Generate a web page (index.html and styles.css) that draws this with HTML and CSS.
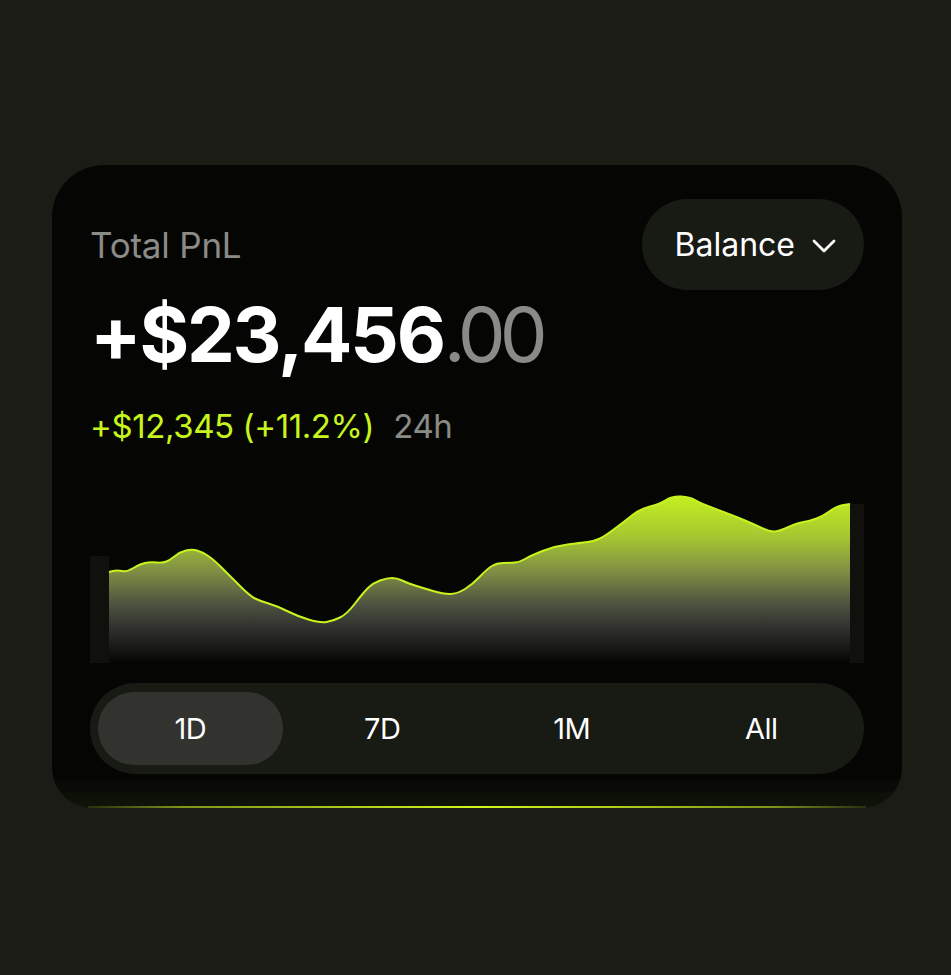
FILE: index.html
```html
<!DOCTYPE html>
<html>
<head>
    <link rel="stylesheet" href="styles.css">
</head>
<body>
    <div class="card">
        <div class="header">
            <span class="label">Total PnL</span>
            <button class="select-button">
                <span>Balance</span>
                <svg width="24" height="14" viewBox="0 0 24 14" fill="none" stroke="currentColor" stroke-width="2.8" stroke-linecap="round" stroke-linejoin="round">
                    <path d="M2 2l10 10 10-10"></path>
                </svg>
            </button>
        </div>

        <div class="total">+$23,456<span class="cents">.00</span></div>

        <div class="change">
            <span class="change-value">+$12,345 (+11.2%)</span>
            <span class="change-period">24h</span>
        </div>

        <div class="chart">
            <svg width="774" height="172" viewBox="0 0 774 172">
                <defs>
                    <linearGradient id="areaFill" gradientUnits="userSpaceOnUse" x1="0" y1="0" x2="0" y2="172">
                        <stop offset="0" stop-color="#c8f41e"></stop>
                        <stop offset="0.26" stop-color="#a6c830"></stop>
                        <stop offset="0.47" stop-color="#7f8e44"></stop>
                        <stop offset="0.66" stop-color="#4c5240"></stop>
                        <stop offset="0.8" stop-color="#30302d"></stop>
                        <stop offset="0.93" stop-color="#141510"></stop>
                        <stop offset="1" stop-color="#050603"></stop>
                    </linearGradient>
                </defs>
                <rect x="0" y="65" width="19" height="107" fill="#10110c"></rect>
                <rect x="760" y="13" width="14" height="159" fill="#10110c"></rect>
                <path fill="url(#areaFill)" d="M19 81 L23 80 Q27 79 32 80 Q37 81 43.5 77 Q50 73 55 72 Q60 71 66.5 71.5 Q73 72 76.5 70.5 Q80 69 85 65 Q90 61 96 59.5 Q102 58 107 59.5 Q112 61 117.5 64.5 Q123 68 131.5 76.5 Q140 85 150 95 Q160 105 165 107.5 Q170 110 178.5 112.5 Q187 115 197 120 Q207 125 218.5 128.5 Q230 132 236.5 131 Q243 130 250 126.5 Q257 123 265 112.5 Q273 102 278 97 Q283 92 290 89.5 Q297 87 302 87 Q307 87 312 89.5 Q317 92 325 94.5 Q333 97 343 100 Q353 103 360 103 Q367 103 375 98 Q383 93 390 85.5 Q397 78 402 75 Q407 72 413.5 72 Q420 72 425 71.5 Q430 71 435 68 Q440 65 452.5 60 Q465 55 477.5 53.5 Q490 52 497.5 51 Q505 50 510 47.5 Q515 45 525 37.5 Q535 30 542.5 24 Q550 18 560 15.5 Q570 13 576 9 Q582 5 591 5.5 Q600 6 605 9 Q610 12 616.5 14.5 Q623 17 640 23.5 Q657 30 668.5 35.5 Q680 41 685 40.5 Q690 40 698.5 36 Q707 32 713.5 31 Q720 30 726.5 27.5 Q733 25 740 20 Q747 15 753.5 14 L760 13 L760 172 L19 172 Z"></path>
                <path fill="none" stroke="#c8f41e" stroke-width="2" stroke-linejoin="round" d="M19 81 L23 80 Q27 79 32 80 Q37 81 43.5 77 Q50 73 55 72 Q60 71 66.5 71.5 Q73 72 76.5 70.5 Q80 69 85 65 Q90 61 96 59.5 Q102 58 107 59.5 Q112 61 117.5 64.5 Q123 68 131.5 76.5 Q140 85 150 95 Q160 105 165 107.5 Q170 110 178.5 112.5 Q187 115 197 120 Q207 125 218.5 128.5 Q230 132 236.5 131 Q243 130 250 126.5 Q257 123 265 112.5 Q273 102 278 97 Q283 92 290 89.5 Q297 87 302 87 Q307 87 312 89.5 Q317 92 325 94.5 Q333 97 343 100 Q353 103 360 103 Q367 103 375 98 Q383 93 390 85.5 Q397 78 402 75 Q407 72 413.5 72 Q420 72 425 71.5 Q430 71 435 68 Q440 65 452.5 60 Q465 55 477.5 53.5 Q490 52 497.5 51 Q505 50 510 47.5 Q515 45 525 37.5 Q535 30 542.5 24 Q550 18 560 15.5 Q570 13 576 9 Q582 5 591 5.5 Q600 6 605 9 Q610 12 616.5 14.5 Q623 17 640 23.5 Q657 30 668.5 35.5 Q680 41 685 40.5 Q690 40 698.5 36 Q707 32 713.5 31 Q720 30 726.5 27.5 Q733 25 740 20 Q747 15 753.5 14 L760 13"></path>
            </svg>
        </div>

        <div class="tabs">
            <button class="tab active">1D</button>
            <button class="tab">7D</button>
            <button class="tab">1M</button>
            <button class="tab">All</button>
        </div>
    </div>
</body>
</html>
```

FILE: styles.css
```css
* {
    box-sizing: border-box;
    margin: 0;
    padding: 0;
}

body {
    background-color: #1a1c15;
    color: #ffffff;
    font-family: Inter, "Noto Sans", Arial, sans-serif;
    width: 951px;
    height: 975px;
    overflow: hidden;
}

.card {
    position: relative;
    width: 850px;
    height: 643px;
    margin: 165px 0 0 52px;
    padding: 34px 38px 35px;
    border-radius: 52px 52px 40px 40px;
    background: linear-gradient(to bottom, #050603 0, #050603 614px, #0a0b07 616px, #0a0b07 626px, #0d1006 628px, #10130a 100%);
}

/* glow line along the bottom edge */
.card::after {
    content: "";
    position: absolute;
    left: 36px;
    right: 36px;
    bottom: 0;
    height: 2px;
    background: linear-gradient(90deg, rgba(140, 160, 40, 0.2) 0, #7d951a 12%, #a8c91c 32%, #cff81d 50%, #a8c91c 70%, #7d951a 88%, rgba(140, 160, 40, 0.2) 100%);
}

.header {
    display: flex;
    align-items: center;
    justify-content: space-between;
    height: 91px;
}

.label {
    font-size: 35px;
    color: #8b8b87;
    letter-spacing: -0.2px;
}

.select-button {
    display: flex;
    align-items: center;
    gap: 17px;
    height: 91px;
    padding: 0 28px 0 33px;
    border: none;
    border-radius: 46px;
    background-color: #181a14;
    color: #ffffff;
    font-family: inherit;
    font-size: 32px;
    cursor: pointer;
}

.select-button svg {
    margin-top: 2px;
}

.total {
    margin-top: 6px;
    font-size: 76px;
    line-height: 1;
    font-weight: 700;
    letter-spacing: -2.2px;
}

.cents {
    font-weight: 400;
    color: #8a8a86;
    letter-spacing: -6px;
}

.change {
    display: flex;
    gap: 19px;
    margin-top: 38px;
    font-size: 33px;
    line-height: 1;
    letter-spacing: -0.4px;
}

.change-value {
    color: #c8f41e;
}

.change-period {
    color: #8a8a86;
}

.chart {
    margin-top: 48px;
    height: 172px;
}

.chart svg {
    display: block;
}

.tabs {
    display: grid;
    grid-template-columns: repeat(4, 1fr);
    height: 91px;
    margin-top: 20px;
    padding: 9px 8px;
    border-radius: 46px;
    background-color: #181a14;
}

.tab {
    border: none;
    border-radius: 36px;
    background: none;
    color: #ffffff;
    font-family: inherit;
    font-size: 29px;
    letter-spacing: -0.5px;
    cursor: pointer;
}

.tab.active {
    margin-right: 5px;
    background-color: #32332e;
}
```
